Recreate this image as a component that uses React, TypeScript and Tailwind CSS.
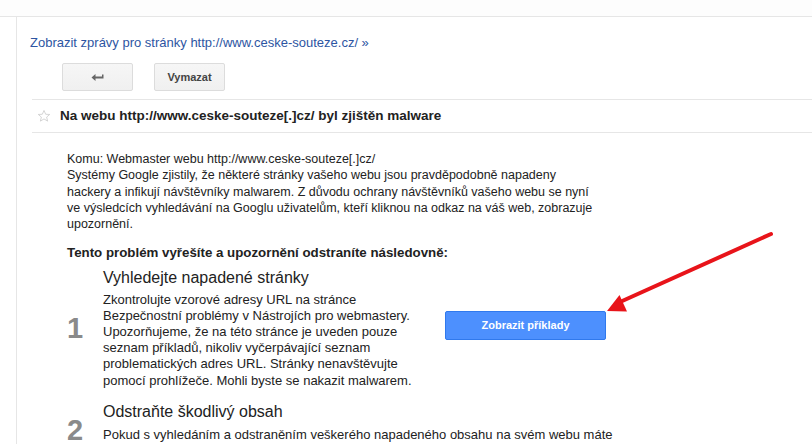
import React from 'react';

// Reply arrow used in the toolbar
const ReplyIcon = () => (
  <svg width="13" height="9" viewBox="0 0 13 9" className="block">
    <path d="M0.5 4.5 L4.5 1 L4.5 3.5 L11 3.5 L11 1.5 L12.5 1.5 L12.5 5.5 L4.5 5.5 L4.5 8 Z" fill="#666" />
  </svg>
);

const StarIcon = () => (
  <svg width="14" height="14" viewBox="0 0 24 24" className="block">
    <path
      d="M12 2.5 L14.9 9 L21.8 9.4 L16.5 13.9 L18.2 20.8 L12 17 L5.8 20.8 L7.5 13.9 L2.2 9.4 L9.1 9 Z"
      fill="none"
      stroke="#c8c8c8"
      strokeWidth="1.3"
      strokeLinejoin="round"
    />
  </svg>
);

const ToolbarButton: React.FC<{ children: React.ReactNode }> = ({ children }) => (
  <button className="flex h-[28px] w-[71px] items-center justify-center rounded-[2px] border border-[#dcdcdc] bg-gradient-to-b from-[#f6f6f6] to-[#f0f0f0] text-[11px] font-bold text-[#444]">
    {children}
  </button>
);

export default function App() {
  return (
    <div className="relative h-[444px] w-[812px] overflow-hidden bg-white font-['Liberation_Sans',Arial,sans-serif] text-[#222]">
      {/* Top strip */}
      <div className="h-[17px] border-b border-[#e6e6e6] bg-[#fdfdfd]" />

      <div className="flex">
        {/* Left gutter */}
        <div className="h-[427px] w-[17px] shrink-0 border-r border-[#e6e6e6] bg-white" />

        <div className="flex-1 pl-[13px] pt-[18px]">
          <a className="block text-[13px] leading-[15px] text-[#2d55a2]">
            Zobrazit zprávy pro stránky http://www.ceske-souteze.cz/ »
          </a>

          {/* Toolbar */}
          <div className="ml-[32px] mt-[13px] flex gap-[21px]">
            <ToolbarButton>
              <ReplyIcon />
            </ToolbarButton>
            <ToolbarButton>Vymazat</ToolbarButton>
          </div>

          {/* Subject */}
          <div className="ml-[2px] mt-[8px] flex h-[34px] items-center gap-[9px] border-y border-[#e6e6e6] pl-[5px]">
            <StarIcon />
            <h1 className="text-[13.5px] font-bold text-[#222]">
              Na webu http://www.ceske-souteze[.]cz/ byl zjištěn malware
            </h1>
          </div>

          {/* Message body */}
          <div className="pl-[37px] pt-[18px] text-[12.5px] leading-[16.25px]">
            <p>Komu: Webmaster webu http://www.ceske-souteze[.]cz/</p>
            <p>
              Systémy Google zjistily, že některé stránky vašeho webu jsou pravděpodobně napadeny
              <br />
              hackery a infikují návštěvníky malwarem. Z důvodu ochrany návštěvníků vašeho webu se nyní
              <br />
              ve výsledcích vyhledávání na Googlu uživatelům, kteří kliknou na odkaz na váš web, zobrazuje
              <br />
              upozornění.
            </p>
            <p className="mt-[13px] text-[13.3px] font-bold">
              Tento problém vyřešíte a upozornění odstraníte následovně:
            </p>

            {/* Step 1 */}
            <div className="mt-[6px] flex items-center">
              <div className="w-[36px] shrink-0 text-[29px] font-bold leading-[22px] text-[#8a8a8a]">1</div>
              <div className="w-[322px] shrink-0">
                <h2 className="text-[16px] leading-[19px]">Vyhledejte napadené stránky</h2>
                <p className="mt-[5px] text-[13px] leading-[16.2px]">
                  Zkontrolujte vzorové adresy URL na stránce
                  <br />
                  Bezpečnostní problémy v Nástrojích pro webmastery.
                  <br />
                  Upozorňujeme, že na této stránce je uveden pouze
                  <br />
                  seznam příkladů, nikoliv vyčerpávající seznam
                  <br />
                  problematických adres URL. Stránky nenavštěvujte
                  <br />
                  pomocí prohlížeče. Mohli byste se nakazit malwarem.
                </p>
              </div>
              <div className="ml-[20px] pb-[6px]">
                <button className="flex h-[29px] w-[161px] items-center justify-center rounded-[2px] border border-[#3079ed] bg-[#4d90fe] text-[11px] font-bold text-white">
                  Zobrazit příklady
                </button>
              </div>
            </div>

            {/* Step 2 */}
            <div className="mt-[13px] flex items-center">
              <div className="w-[36px] shrink-0 text-[29px] font-bold leading-[22px] text-[#8a8a8a]">2</div>
              <div className="flex-1">
                <h2 className="text-[16px] leading-[19px]">Odstraňte škodlivý obsah</h2>
                <p className="mt-[6px] text-[13px] leading-[16.2px]">
                  Pokud s vyhledáním a odstraněním veškerého napadeného obsahu na svém webu máte
                </p>
                <div className="h-[16px]" />
              </div>
            </div>
          </div>
        </div>
      </div>

      {/* Red pointer arrow */}
      <svg className="pointer-events-none absolute left-0 top-0" width="812" height="444">
        <line x1="771" y1="234" x2="620" y2="302" stroke="#e8141a" strokeWidth="4" strokeLinecap="round" />
        <polygon points="607,311 619.5,295 627,311.5" fill="#e8141a" />
      </svg>
    </div>
  );
}
